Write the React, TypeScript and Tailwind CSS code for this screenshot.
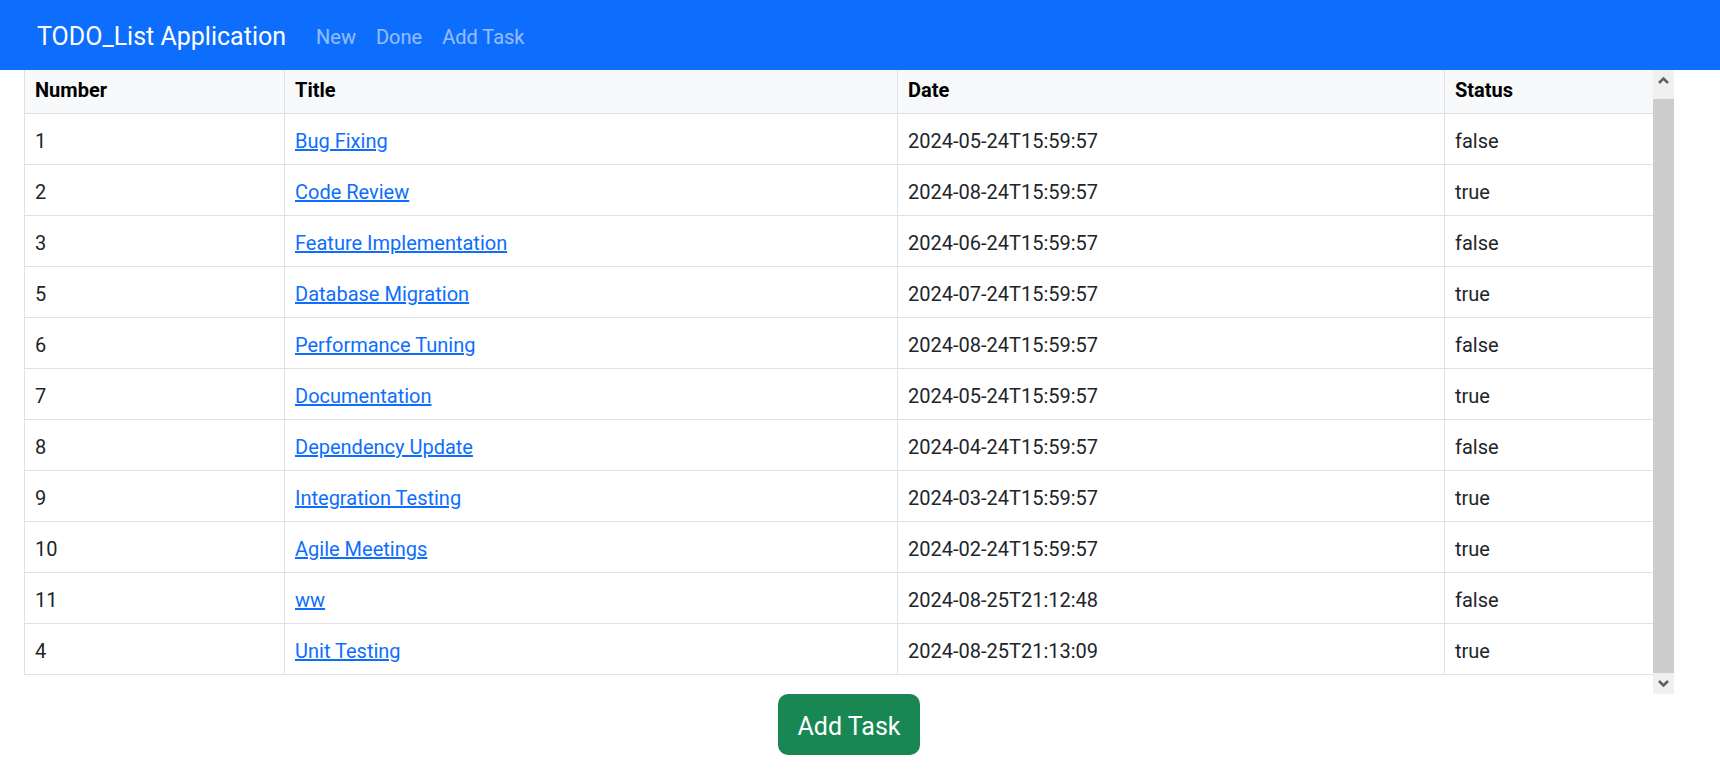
const tasks = [
  { id: 1, title: "Bug Fixing", date: "2024-05-24T15:59:57", done: false },
  { id: 2, title: "Code Review", date: "2024-08-24T15:59:57", done: true },
  { id: 3, title: "Feature Implementation", date: "2024-06-24T15:59:57", done: false },
  { id: 5, title: "Database Migration", date: "2024-07-24T15:59:57", done: true },
  { id: 6, title: "Performance Tuning", date: "2024-08-24T15:59:57", done: false },
  { id: 7, title: "Documentation", date: "2024-05-24T15:59:57", done: true },
  { id: 8, title: "Dependency Update", date: "2024-04-24T15:59:57", done: false },
  { id: 9, title: "Integration Testing", date: "2024-03-24T15:59:57", done: true },
  { id: 10, title: "Agile Meetings", date: "2024-02-24T15:59:57", done: true },
  { id: 11, title: "ww", date: "2024-08-25T21:12:48", done: false },
  { id: 4, title: "Unit Testing", date: "2024-08-25T21:13:09", done: true },
];

const Arrow = ({ up }: { up?: boolean }) => (
  <svg width="11" height="7" viewBox="0 0 11 7" className={up ? "" : "rotate-180"}>
    <polyline points="1,6 5.5,1.5 10,6" fill="none" stroke="#606060" strokeWidth="2.5" />
  </svg>
);

const App = () => {
  return (
    <div className="min-h-screen bg-white font-['Roboto',sans-serif] text-[#212529]">
      {/* Navbar */}
      <nav className="h-[70px] bg-[#0d6efd] flex items-center pl-[37px] pt-[4px]">
        <span className="text-[25px] text-white mr-[20px]">TODO_List Application</span>
        <a href="#" className="px-[10px] text-[20px] text-white/55">New</a>
        <a href="#" className="px-[10px] text-[20px] text-white/55">Done</a>
        <a href="#" className="px-[10px] text-[20px] text-white/55">Add Task</a>
      </nav>

      <div className="ml-[24px] w-[1650px]">
        {/* Table with scrollbar */}
        <div className="flex h-[624px]">
          <div className="w-[1629px] overflow-hidden">
            <table className="-mt-[8px] mb-[20px] w-full table-fixed border-collapse text-[20px] leading-[30px]">
              <thead>
                <tr className="bg-[#f8f9fa] text-black">
                  <th className="w-[260px] border border-[#dee2e6] px-[10px] pt-[12px] pb-[8px] text-left font-bold">Number</th>
                  <th className="w-[613px] border border-[#dee2e6] px-[10px] pt-[12px] pb-[8px] text-left font-bold">Title</th>
                  <th className="w-[547px] border border-[#dee2e6] px-[10px] pt-[12px] pb-[8px] text-left font-bold">Date</th>
                  <th className="w-[209px] border border-[#dee2e6] px-[10px] pt-[12px] pb-[8px] text-left font-bold">Status</th>
                </tr>
              </thead>
              <tbody>
                {tasks.map((t) => (
                  <tr key={t.id}>
                    <td className="border border-[#dee2e6] px-[10px] pt-[12px] pb-[8px]">{t.id}</td>
                    <td className="border border-[#dee2e6] px-[10px] pt-[12px] pb-[8px]">
                      <a href="#" className="text-[#0d6efd] underline">{t.title}</a>
                    </td>
                    <td className="border border-[#dee2e6] px-[10px] pt-[12px] pb-[8px]">{t.date}</td>
                    <td className="border border-[#dee2e6] px-[10px] pt-[12px] pb-[8px]">{t.done ? "true" : "false"}</td>
                  </tr>
                ))}
              </tbody>
            </table>
          </div>
          <div className="w-[21px] bg-[#f0f0f0] flex flex-col">
            <div className="h-[21px] flex items-center justify-center"><Arrow up /></div>
            <div className="flex-1 pt-[8px]">
              <div className="h-[574px] bg-[#cdcdcd]"></div>
            </div>
            <div className="h-[21px] flex items-center justify-center"><Arrow /></div>
          </div>
        </div>

        {/* Add button */}
        <div className="flex justify-center">
          <button className="h-[61px] px-[20px] pt-[3px] rounded-[10px] bg-[#198754] text-white text-[25px] leading-[37px]">
            Add Task
          </button>
        </div>
      </div>
    </div>
  );
};

export default App;
